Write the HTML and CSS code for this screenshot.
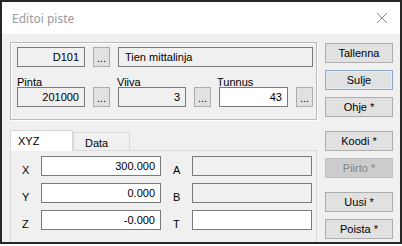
FILE: index.html
```html
<!DOCTYPE html>
<html lang="fi">
<head>
  <meta charset="UTF-8">
  <title>Editoi piste</title>
  <link rel="stylesheet" href="styles.css">
</head>
<body>
  <div class="window">
    <div class="titlebar">
      <span class="title">Editoi piste</span>
      <svg class="close" width="12" height="12" viewBox="0 0 12 12">
        <path d="M1 1 L11 11 M11 1 L1 11" stroke="#8a8a8a" stroke-width="1" fill="none"/>
      </svg>
    </div>

    <div class="dialog">
      <div class="main">
        <div class="group">
          <div class="row">
            <div class="field ro num w68">D101</div>
            <div class="dots">...</div>
            <div class="field ro wide">Tien mittalinja</div>
          </div>
          <div class="labels">
            <span class="lbl w100">Pinta</span>
            <span class="lbl w100">Viiva</span>
            <span class="lbl">Tunnus</span>
          </div>
          <div class="row">
            <div class="field ro num w68">201000</div>
            <div class="dots">...</div>
            <div class="field ro num w68">3</div>
            <div class="dots">...</div>
            <div class="field num w69">43</div>
            <div class="dots">...</div>
          </div>
        </div>

        <div class="tabs">
          <div class="tab active">XYZ</div>
          <div class="tab">Data</div>
        </div>
        <div class="pane">
          <span class="plbl">X</span>
          <div class="field num">300.000</div>
          <span class="plbl right">A</span>
          <div class="field ro"></div>

          <span class="plbl">Y</span>
          <div class="field num">0.000</div>
          <span class="plbl right">B</span>
          <div class="field ro"></div>

          <span class="plbl">Z</span>
          <div class="field num">-0.000</div>
          <span class="plbl right">T</span>
          <div class="field"></div>
        </div>
      </div>

      <div class="side">
        <div class="btn">Tallenna</div>
        <div class="btn default">Sulje</div>
        <div class="btn">Ohje *</div>
        <div class="btn spaced">Koodi *</div>
        <div class="btn disabled">Piirto *</div>
        <div class="btn spaced">Uusi *</div>
        <div class="btn">Poista *</div>
      </div>
    </div>
  </div>
</body>
</html>
```

FILE: styles.css
```css
body {
  margin: 0;
  background: #fff;
  font-family: "Liberation Sans", Arial, sans-serif;
  font-size: 11px;
  color: #000;
}
.window {
  box-sizing: border-box;
  width: 402px;
  height: 244px;
  border: 2px solid #262626;
  background: #f0f0f0;
  overflow: hidden;
}
.titlebar {
  height: 32px;
  background: #fff;
  display: flex;
  align-items: center;
  justify-content: space-between;
  padding: 0 12px 0 10px;
}
.title {
  font-family: "Noto Sans", sans-serif;
  font-size: 12px;
  color: #9a9a9a;
}
.close {
  display: block;
}
.dialog {
  display: flex;
  padding: 8px 0 0 8px;
}
.main {
  width: 307px;
}
.group {
  height: 72px;
  border: 1px solid #b9b9b9;
  box-shadow: inset 1px 1px 0 #fff, 1px 1px 0 #fff;
  padding: 4px 0 0 6px;
}
.row {
  display: flex;
  gap: 8px;
}
.field {
  box-sizing: border-box;
  height: 20px;
  line-height: 18px;
  border: 1px solid #7a7a7a;
  background: #fff;
  padding: 0 5px;
  white-space: nowrap;
}
.field.ro {
  background: #f0f0f0;
}
.num {
  text-align: right;
}
.w68 { width: 68px; }
.w69 { width: 69px; }
.wide { width: 195px; padding-left: 6px; }
.dots {
  box-sizing: border-box;
  width: 17px;
  height: 20px;
  border: 1px solid #adadad;
  background: #e1e1e1;
  text-align: center;
  line-height: 20px;
}
.labels {
  display: flex;
  align-items: flex-end;
  height: 20px;
  line-height: 10px;
}
.lbl.w100 { width: 100px; }
.tabs {
  display: flex;
  align-items: flex-end;
  margin-top: 10px;
  height: 20px;
}
.tab {
  box-sizing: border-box;
  height: 18px;
  width: 57px;
  border: 1px solid #d9d9d9;
  border-bottom: none;
  background: #f0f0f0;
  padding: 3px 0 0 11px;
  line-height: 14px;
}
.tab.active {
  height: 21px;
  width: 63px;
  background: #fff;
  margin-bottom: -1px;
  padding: 3px 0 0 7px;
  position: relative;
}
.pane {
  box-sizing: border-box;
  height: 110px;
  border: 1px solid #d9d9d9;
  padding: 5px 0 0 11px;
  display: grid;
  grid-template-columns: 19px 120px 31px 120px;
  grid-auto-rows: 20px;
  row-gap: 7px;
}
.plbl {
  padding-top: 8px;
  line-height: 12px;
}
.plbl.right {
  padding-left: 12px;
}
.side {
  margin-left: 8px;
  padding-top: 1px;
  display: flex;
  flex-direction: column;
  gap: 7px;
}
.btn {
  box-sizing: border-box;
  width: 68px;
  height: 20px;
  border: 1px solid #adadad;
  background: #e1e1e1;
  text-align: center;
  line-height: 18px;
}
.btn.default {
  border-color: #8aa6c6;
  box-shadow: inset 0 0 0 1px #e3ebf4;
}
.btn.disabled {
  background: #cccccc;
  border-color: #bfbfbf;
  color: #838383;
}
.btn.spaced {
  margin-top: 7px;
}
```
